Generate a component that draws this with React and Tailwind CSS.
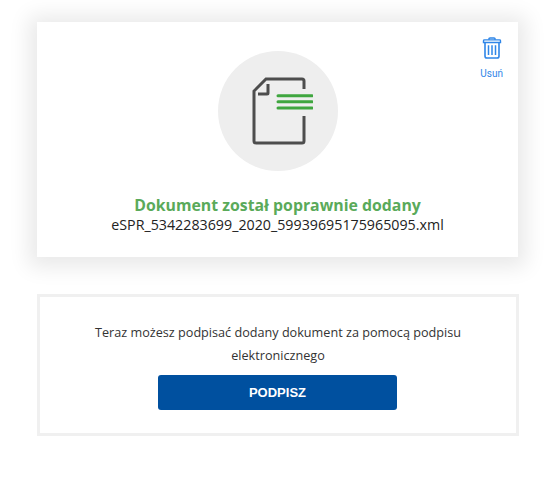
import React from 'react';

const DocIcon = () => (
  <svg width="70" height="70" viewBox="0 0 70 70" fill="none" className="block">
    <path d="M61 13 V5 Q61 3 59 3 H23 L11 15 V65 Q11 67 13 67 H59 Q61 67 61 65 V40" stroke="#4d4d4d" strokeWidth="3" />
    <path d="M25 8 V17 Q25 18 24 18 H15" stroke="#4d4d4d" strokeWidth="3" />
    <path d="M35 19.700 H69 M35 25.800 H69 M35 32 H69" stroke="#3fa63f" strokeWidth="3" strokeLinecap="round" />
  </svg>
);

const TrashIcon = () => (
  <svg width="20" height="22" viewBox="0 0 20 24" preserveAspectRatio="none" fill="none" stroke="#2f86e8" className="block">
    <path d="M7 3 V2 Q7 1 8 1 H12 Q13 1 13 2 V3" strokeWidth="1.6" />
    <path d="M1.500 6 V4 Q1.500 3.200 2.500 3.200 H17.500 Q18.500 3.200 18.500 4 V6 Z" strokeWidth="1.4" />
    <path d="M3 6 V21 Q3 23 5 23 H15 Q17 23 17 21 V6" strokeWidth="1.6" />
    <path d="M6.500 9 V19.500 M10 9 V19.500 M13.500 9 V19.500" strokeWidth="1.5" />
  </svg>
);

export default function App() {
  return (
    <div className="w-[558px] h-[495px] bg-white overflow-hidden pl-[37px] pr-[39px] pt-[22px] font-['Open_Sans',sans-serif]">
      {/* Dokument dodany */}
      <div className="relative mr-[1px] h-[235px] bg-white shadow-[0_2px_20px_8px_rgba(0,0,0,0.09)] flex flex-col items-center pt-[29px]">
        <a className="absolute top-[15px] right-[15px] flex flex-col items-center text-[#2f86e8]">
          <TrashIcon />
          <span className="text-[10px] leading-[14px] mt-[8px] font-['Roboto',sans-serif]">Usuń</span>
        </a>
        <div className="w-[120px] h-[120px] rounded-full bg-[#eeeeee] flex items-center justify-center">
          <DocIcon />
        </div>
        <div className="mt-[23px] text-[15.85px] leading-[22px] font-bold text-[#5aaa5a]">Dokument został poprawnie dodany</div>
        <div className="-mt-[1px] text-[14.25px] leading-[20px] text-[#222222]">eSPR_5342283699_2020_59939695175965095.xml</div>
      </div>

      {/* Podpis */}
      <div className="mt-[37px] h-[142px] border-[3px] border-[#f0f0f0] flex flex-col items-center pt-[24px]">
        <p className="w-[400px] text-center text-[12.65px] leading-[23px] text-[#333333]">
          Teraz możesz podpisać dodany dokument za pomocą podpisu elektronicznego
        </p>
        <button className="mt-[8px] mr-[1px] w-[239px] h-[35px] rounded-[3px] bg-[#00509f] text-white text-[13px] font-bold font-['Liberation_Sans',sans-serif]">
          PODPISZ
        </button>
      </div>
    </div>
  );
}
